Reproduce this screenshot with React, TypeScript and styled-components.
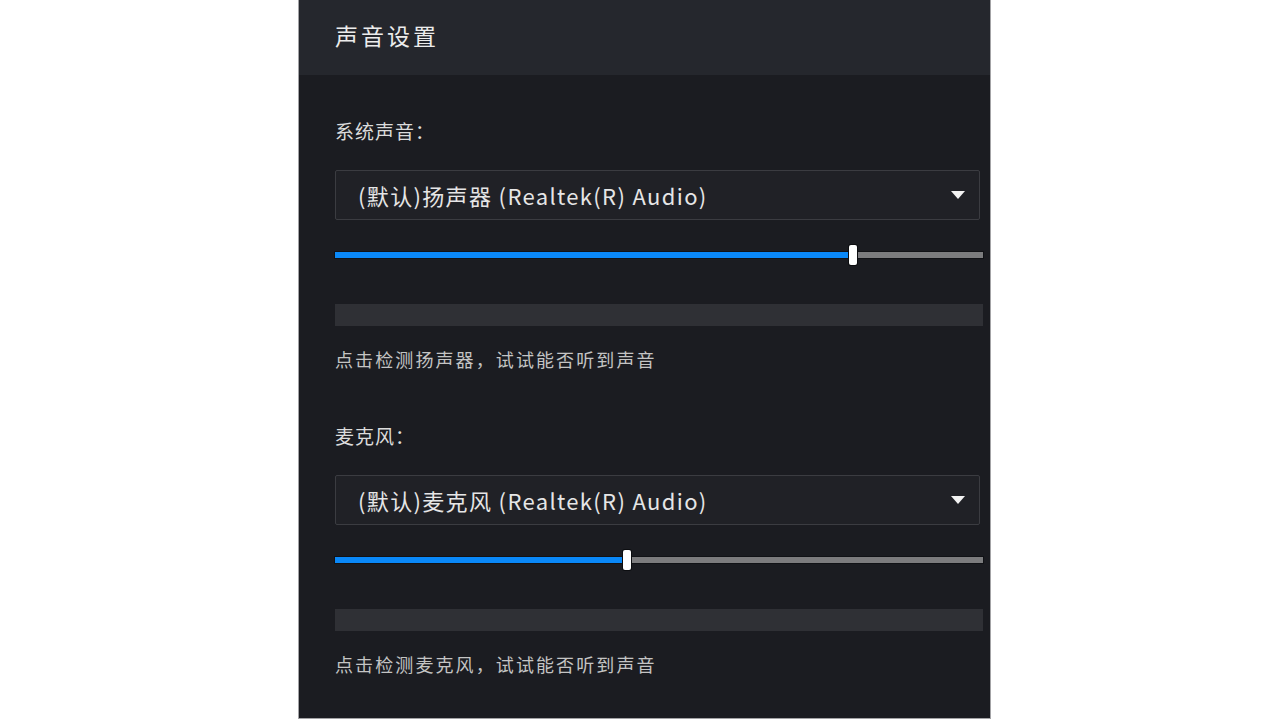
import styled, { createGlobalStyle } from 'styled-components';

const GlobalStyle = createGlobalStyle`
  html, body {
    margin: 0;
    padding: 0;
    background: #ffffff;
  }
  body {
    font-family: "Noto Sans CJK SC", "Noto Sans", sans-serif;
  }
`;

interface Device {
  label: string;
  device: string;
  volume: number;
  hint: string;
}

const devices: Device[] = [
  {
    label: '系统声音：',
    device: '(默认)扬声器 (Realtek(R) Audio)',
    volume: 0.8,
    hint: '点击检测扬声器，试试能否听到声音',
  },
  {
    label: '麦克风：',
    device: '(默认)麦克风 (Realtek(R) Audio)',
    volume: 0.45,
    hint: '点击检测麦克风，试试能否听到声音',
  },
];

const Page = styled.div`
  width: 1280px;
  height: 720px;
  display: flex;
  padding-left: 298px;
  box-sizing: border-box;
`;

const Panel = styled.div`
  width: 693px;
  height: 719px;
  box-sizing: border-box;
  display: flex;
  flex-direction: column;
  background: #1b1c21;
  border: 1px solid #a3a3a6;
  border-top: none;
`;

const Header = styled.div`
  height: 75px;
  flex: none;
  box-sizing: border-box;
  display: flex;
  align-items: center;
  padding: 0 0 6px 36px;
  background: #25272d;
`;

const Title = styled.h1`
  margin: 0;
  font-size: 23px;
  font-weight: 400;
  color: #ececec;
  letter-spacing: 3px;
`;

const Body = styled.div`
  display: flex;
  flex-direction: column;
  padding: 44px 7px 0 36px;
`;

const Section = styled.section`
  display: flex;
  flex-direction: column;
  & + & {
    margin-top: 53px;
  }
`;

const Label = styled.div`
  height: 24px;
  line-height: 24px;
  font-size: 19px;
  color: #dcdcdc;
  letter-spacing: 1px;
`;

const Select = styled.div`
  margin-top: 27px;
  margin-right: 3px;
  height: 50px;
  box-sizing: border-box;
  display: flex;
  align-items: center;
  justify-content: space-between;
  padding: 0 14px 0 22px;
  background: #202126;
  border: 1px solid #3b3c41;
  border-radius: 2px;
`;

const SelectText = styled.span`
  font-size: 22px;
  color: #e6e6e6;
  letter-spacing: 1.35px;
`;

const Arrow = styled.span`
  width: 0;
  height: 0;
  border-left: 7px solid transparent;
  border-right: 7px solid transparent;
  border-top: 8px solid #f2f2f2;
`;

const SliderRow = styled.div`
  margin-top: 25px;
  height: 20px;
  position: relative;
  display: flex;
  align-items: center;
`;

const Track = styled.div`
  flex: 1;
  height: 6px;
  display: flex;
  background: #7c7c7e;
  box-shadow: 0 0 0 1px #111216;
`;

const Fill = styled.div`
  height: 100%;
  background: #0a88f8;
`;

const Thumb = styled.div`
  position: absolute;
  top: 0;
  width: 8px;
  height: 20px;
  margin-left: -4px;
  box-sizing: border-box;
  background: #ffffff;
  border-radius: 2px;
  box-shadow: 0 0 0 1px #0c0d10;
`;

const TestBar = styled.div`
  margin-top: 39px;
  height: 22px;
  background: #2f3035;
`;

const Hint = styled.div`
  margin-top: 21px;
  height: 24px;
  line-height: 24px;
  font-size: 18px;
  color: #c4c4c4;
  letter-spacing: 2.1px;
`;

function DeviceSection({ item }: { item: Device }) {
  const pct = `${item.volume * 100}%`;
  return (
    <Section>
      <Label>{item.label}</Label>
      <Select>
        <SelectText>{item.device}</SelectText>
        <Arrow />
      </Select>
      <SliderRow>
        <Track>
          <Fill style={{ width: pct }} />
        </Track>
        <Thumb style={{ left: pct }} />
      </SliderRow>
      <TestBar />
      <Hint>{item.hint}</Hint>
    </Section>
  );
}

export default function App() {
  return (
    <>
      <GlobalStyle />
      <Page>
        <Panel>
          <Header>
            <Title>声音设置</Title>
          </Header>
          <Body>
            {devices.map((d) => (
              <DeviceSection key={d.label} item={d} />
            ))}
          </Body>
        </Panel>
      </Page>
    </>
  );
}
